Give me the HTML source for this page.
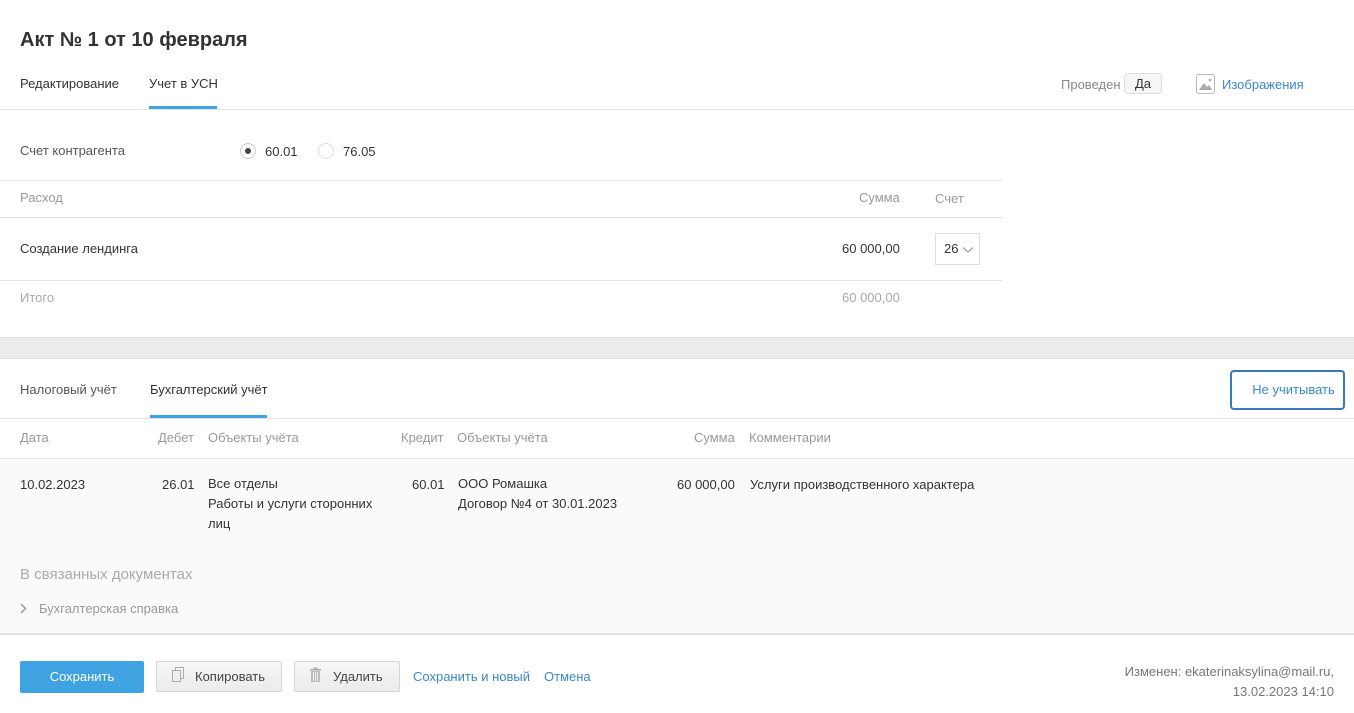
<!DOCTYPE html>
<html><head><meta charset="utf-8"><style>
*{box-sizing:border-box;margin:0;padding:0}
body{width:1354px;height:713px;overflow:hidden;background:#fff;font-family:"Liberation Sans",sans-serif;font-size:13px;color:#333;position:relative}
.a{position:absolute;white-space:nowrap}
.g{color:#999}
.b{color:#3a87c8}
.hl{position:absolute;height:1px;background:#e3e3e3}
.btn{position:absolute;height:31px;border:1px solid #d6d6d6;background:linear-gradient(#f7f7f7,#ebebeb);border-radius:2px;font-size:13px;color:#444;line-height:29px}
</style></head><body>
<div class="a" style="left:20px;top:29px;font-size:20px;font-weight:bold;color:#333">Акт № 1 от 10 февраля</div>
<div class="a" style="left:20px;top:76px">Редактирование</div>
<div class="a" style="left:149px;top:76px">Учет в УСН</div>
<div style="position:absolute;left:149px;top:106px;width:68px;height:3px;background:#3ea3e0"></div>
<div class="hl" style="left:0;top:109px;width:1354px"></div>
<div class="a g" style="left:1061px;top:77px;color:#888">Проведен</div>
<div class="a" style="left:1124px;top:73px;width:38px;height:21px;border:1px solid #ddd;border-radius:4px;background:#f6f6f6;text-align:center;line-height:19px">Да</div>
<svg class="a" style="left:1196px;top:74px" width="19" height="20" viewBox="0 0 19 20"><rect x="0.5" y="0.5" width="18" height="19" rx="2" fill="#fff" stroke="#bbb"/><path d="M3 16 L8 9 L11 13 L13 11 L16 16Z" fill="#aaa"/><circle cx="14" cy="6" r="1.3" fill="#aaa"/></svg>
<div class="a b" style="left:1222px;top:77px">Изображения</div>

<div class="a" style="left:20px;top:143px;color:#555">Счет контрагента</div>
<div class="a" style="left:240px;top:143px;width:16px;height:16px;border:1px solid #ccc;border-radius:50%"><div style="position:absolute;left:4px;top:4px;width:6px;height:6px;border-radius:50%;background:#444"></div></div>
<div class="a" style="left:265px;top:144px">60.01</div>
<div class="a" style="left:318px;top:143px;width:16px;height:16px;border:1px solid #ddd;border-radius:50%"></div>
<div class="a" style="left:343px;top:144px">76.05</div>
<div class="hl" style="left:0;top:180px;width:1002px"></div>
<div class="a g" style="left:20px;top:190px">Расход</div>
<div class="a g" style="left:859px;top:190px">Сумма</div>
<div class="a g" style="left:935px;top:191px">Счет</div>
<div class="hl" style="left:0;top:217px;width:1002px"></div>
<div class="a" style="left:20px;top:241px">Создание лендинга</div>
<div class="a" style="left:842px;top:241px">60 000,00</div>
<div class="a" style="left:935px;top:233px;width:45px;height:32px;border:1px solid #ddd;line-height:30px;padding-left:8px">26 <svg width="12" height="8" viewBox="0 0 12 8" style="vertical-align:middle"><path d="M1 1.5 L6 6 L11 1.5" fill="none" stroke="#aaa" stroke-width="1.5"/></svg></div>
<div class="hl" style="left:0;top:280px;width:1002px"></div>
<div class="a g" style="left:20px;top:290px;color:#aaa">Итого</div>
<div class="a g" style="left:842px;top:290px;color:#aaa">60 000,00</div>

<div style="position:absolute;left:0;top:337px;width:1354px;height:22px;background:#ececec;border-top:1px solid #e0e0e0;border-bottom:1px solid #e0e0e0"></div>
<div class="a" style="left:20px;top:382px;color:#555">Налоговый учёт</div>
<div class="a" style="left:150px;top:382px">Бухгалтерский учёт</div>
<div style="position:absolute;left:150px;top:415px;width:117px;height:3px;background:#3ea3e0"></div>
<div class="a b" style="left:1230px;top:370px;width:115px;height:40px;border:2px solid #3a78b8;border-radius:4px;line-height:36px;text-align:center;padding-left:12px">Не учитывать</div>
<div class="hl" style="left:0;top:418px;width:1354px"></div>
<div class="a g" style="left:20px;top:430px">Дата</div>
<div class="a g" style="left:158px;top:430px">Дебет</div>
<div class="a g" style="left:208px;top:430px">Объекты учёта</div>
<div class="a g" style="left:401px;top:430px">Кредит</div>
<div class="a g" style="left:457px;top:430px">Объекты учёта</div>
<div class="a g" style="left:694px;top:430px">Сумма</div>
<div class="a g" style="left:749px;top:430px">Комментарии</div>
<div style="position:absolute;left:0;top:458px;width:1354px;height:177px;background:#fafafa;border-top:1px solid #e3e3e3;border-bottom:2px solid #e3e3e3"></div>
<div class="a" style="left:20px;top:477px">10.02.2023</div>
<div class="a" style="left:162px;top:477px">26.01</div>
<div class="a" style="left:208px;top:474px;line-height:20px">Все отделы<br>Работы и услуги сторонних<br>лиц</div>
<div class="a" style="left:412px;top:477px">60.01</div>
<div class="a" style="left:458px;top:474px;line-height:20px">ООО Ромашка<br>Договор №4 от 30.01.2023</div>
<div class="a" style="left:677px;top:477px">60 000,00</div>
<div class="a" style="left:750px;top:477px">Услуги производственного характера</div>
<div class="a" style="left:20px;top:566px;font-size:15px;color:#aaa">В связанных документах</div>
<svg class="a" style="left:20px;top:603px" width="7" height="11" viewBox="0 0 7 11"><path d="M1 1 L5.5 5.5 L1 10" fill="none" stroke="#999" stroke-width="1.4"/></svg>
<div class="a" style="left:39px;top:601px;color:#999">Бухгалтерская справка</div>

<div class="a" style="left:20px;top:661px;width:124px;height:32px;background:#3ea3e0;border-radius:2px;color:#fff;font-size:13px;text-align:center;line-height:32px">Сохранить</div>
<div class="btn" style="left:156px;top:661px;width:126px;padding-left:38px">Копировать</div>
<svg class="a" style="left:171px;top:667px" width="14" height="16" viewBox="0 0 14 16"><rect x="4.5" y="0.5" width="8" height="11" fill="none" stroke="#aaa"/><rect x="1.5" y="3.5" width="8" height="11" fill="#eee" stroke="#aaa"/></svg>
<div class="btn" style="left:294px;top:661px;width:106px;padding-left:38px">Удалить</div>
<svg class="a" style="left:309px;top:667px" width="13" height="16" viewBox="0 0 13 16"><rect x="1" y="2" width="11" height="1.5" fill="#aaa"/><rect x="4.5" y="0.5" width="4" height="2" fill="#aaa"/><rect x="2" y="4" width="9" height="11" fill="#bbb"/><path d="M4.5 5v9M6.5 5v9M8.5 5v9" stroke="#eee"/></svg>
<div class="a b" style="left:413px;top:669px">Сохранить и новый</div>
<div class="a b" style="left:544px;top:669px">Отмена</div>
<div class="a" style="right:20px;top:662px;text-align:right;color:#777;line-height:20px">Изменен: ekaterinaksylina@mail.ru,<br>13.02.2023 14:10</div>
</body></html>
